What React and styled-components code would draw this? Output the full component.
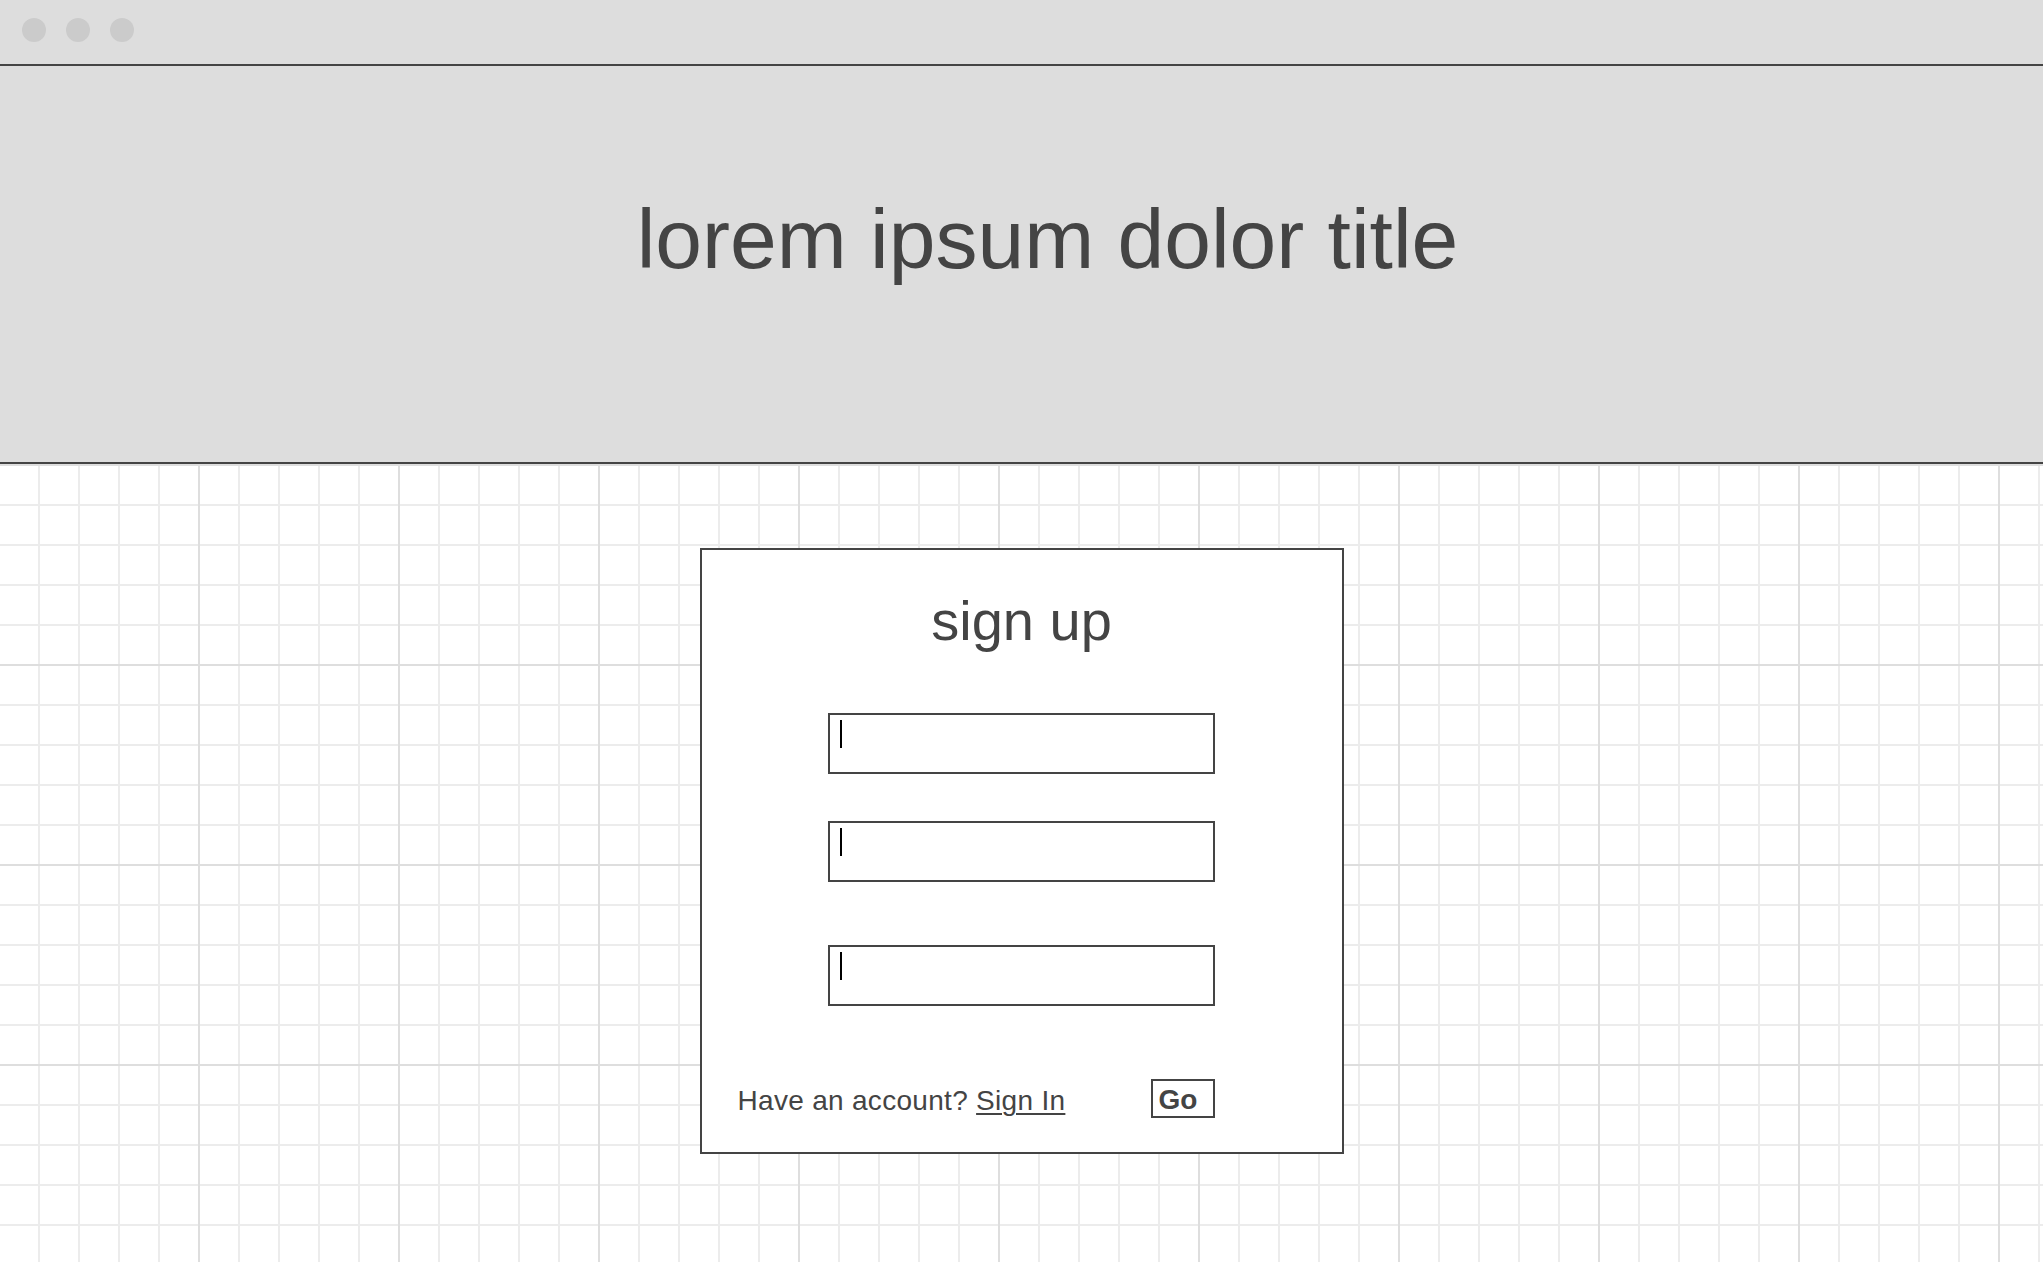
import React from "react";
import styled, { createGlobalStyle } from "styled-components";

const GlobalStyle = createGlobalStyle`
  html, body {
    margin: 0;
    padding: 0;
    background: #fff;
  }
  body {
    font-family: "Liberation Sans", Arial, sans-serif;
    color: #444;
  }
`;

const Page = styled.div`
  display: flex;
  flex-direction: column;
  min-height: 100vh;
`;

const WindowBar = styled.div`
  height: 66px;
  box-sizing: border-box;
  background: #ddd;
  border-bottom: 2px solid #444;
  display: flex;
  align-items: flex-start;
  gap: 20px;
  padding: 18px 0 0 22px;
`;

const Dot = styled.span`
  width: 24px;
  height: 24px;
  border-radius: 50%;
  background: #cbcbcb;
`;

const Header = styled.header`
  height: 396px;
  background: #ddd;
  border-bottom: 2px solid #444;
  display: flex;
  justify-content: center;
  padding-left: 52px;
`;

const Title = styled.h1`
  margin: 126px 0 0;
  font-size: 84px;
  font-weight: 400;
  line-height: 94px;
  color: #444;
`;

const Canvas = styled.main`
  flex: 1;
  display: flex;
  justify-content: center;
  align-items: flex-start;
  background-color: #fff;
  background-image:
    linear-gradient(to right, transparent 198px, #dedede 198px, #dedede 200px),
    linear-gradient(to bottom, #dedede 0, #dedede 2px, transparent 2px),
    linear-gradient(to right, transparent 38px, #ececec 38px, #ececec 40px),
    linear-gradient(to bottom, #ececec 0, #ececec 2px, transparent 2px);
  background-size: 200px 200px, 200px 200px, 40px 40px, 40px 40px;
  background-position: 0 0;
`;

const Card = styled.section`
  margin-top: 84px;
  width: 644px;
  box-sizing: border-box;
  border: 2px solid #444;
  background: #fff;
  display: flex;
  flex-direction: column;
  align-items: center;
  padding: 39px 0 34px;
`;

const CardTitle = styled.h2`
  margin: 0;
  font-size: 56px;
  font-weight: 400;
  line-height: 64px;
  color: #444;
`;

const TextField = styled.div`
  margin-top: ${(p) => p.$gap}px;
  width: 387px;
  height: 61px;
  box-sizing: border-box;
  border: 2px solid #444;
  background: #fff;
  display: flex;
  align-items: flex-start;
  padding: 5px 0 0 10px;
`;

const Caret = styled.span`
  width: 2px;
  height: 28px;
  background: #000;
`;

const Footer = styled.div`
  margin-top: 73px;
  align-self: stretch;
  display: flex;
  justify-content: space-between;
  align-items: flex-start;
  padding: 0 127px 0 36px;
`;

const Prompt = styled.p`
  margin: 0;
  padding-top: 4px;
  font-size: 28px;
  letter-spacing: 0.3px;
  line-height: 35px;
  color: #444;
`;

const SignInLink = styled.a`
  color: #444;
  text-decoration: underline;
  text-underline-offset: 3px;
  text-decoration-thickness: 2px;
`;

const GoButton = styled.button`
  width: 64px;
  height: 39px;
  box-sizing: border-box;
  border: 2px solid #444;
  background: #fff;
  padding: 3px 0 0 6px;
  text-align: left;
  font-family: "Liberation Sans", Arial, sans-serif;
  font-size: 28px;
  font-weight: 700;
  line-height: 32px;
  color: #444;
`;

export default function App() {
  return (
    <>
      <GlobalStyle />
      <Page>
        <WindowBar>
          <Dot />
          <Dot />
          <Dot />
        </WindowBar>
        <Header>
          <Title>lorem ipsum dolor title</Title>
        </Header>
        <Canvas>
          <Card>
            <CardTitle>sign up</CardTitle>
            <TextField $gap={60}>
              <Caret />
            </TextField>
            <TextField $gap={47}>
              <Caret />
            </TextField>
            <TextField $gap={63}>
              <Caret />
            </TextField>
            <Footer>
              <Prompt>
                Have an account? <SignInLink href="#">Sign In</SignInLink>
              </Prompt>
              <GoButton type="button">Go</GoButton>
            </Footer>
          </Card>
        </Canvas>
      </Page>
    </>
  );
}
